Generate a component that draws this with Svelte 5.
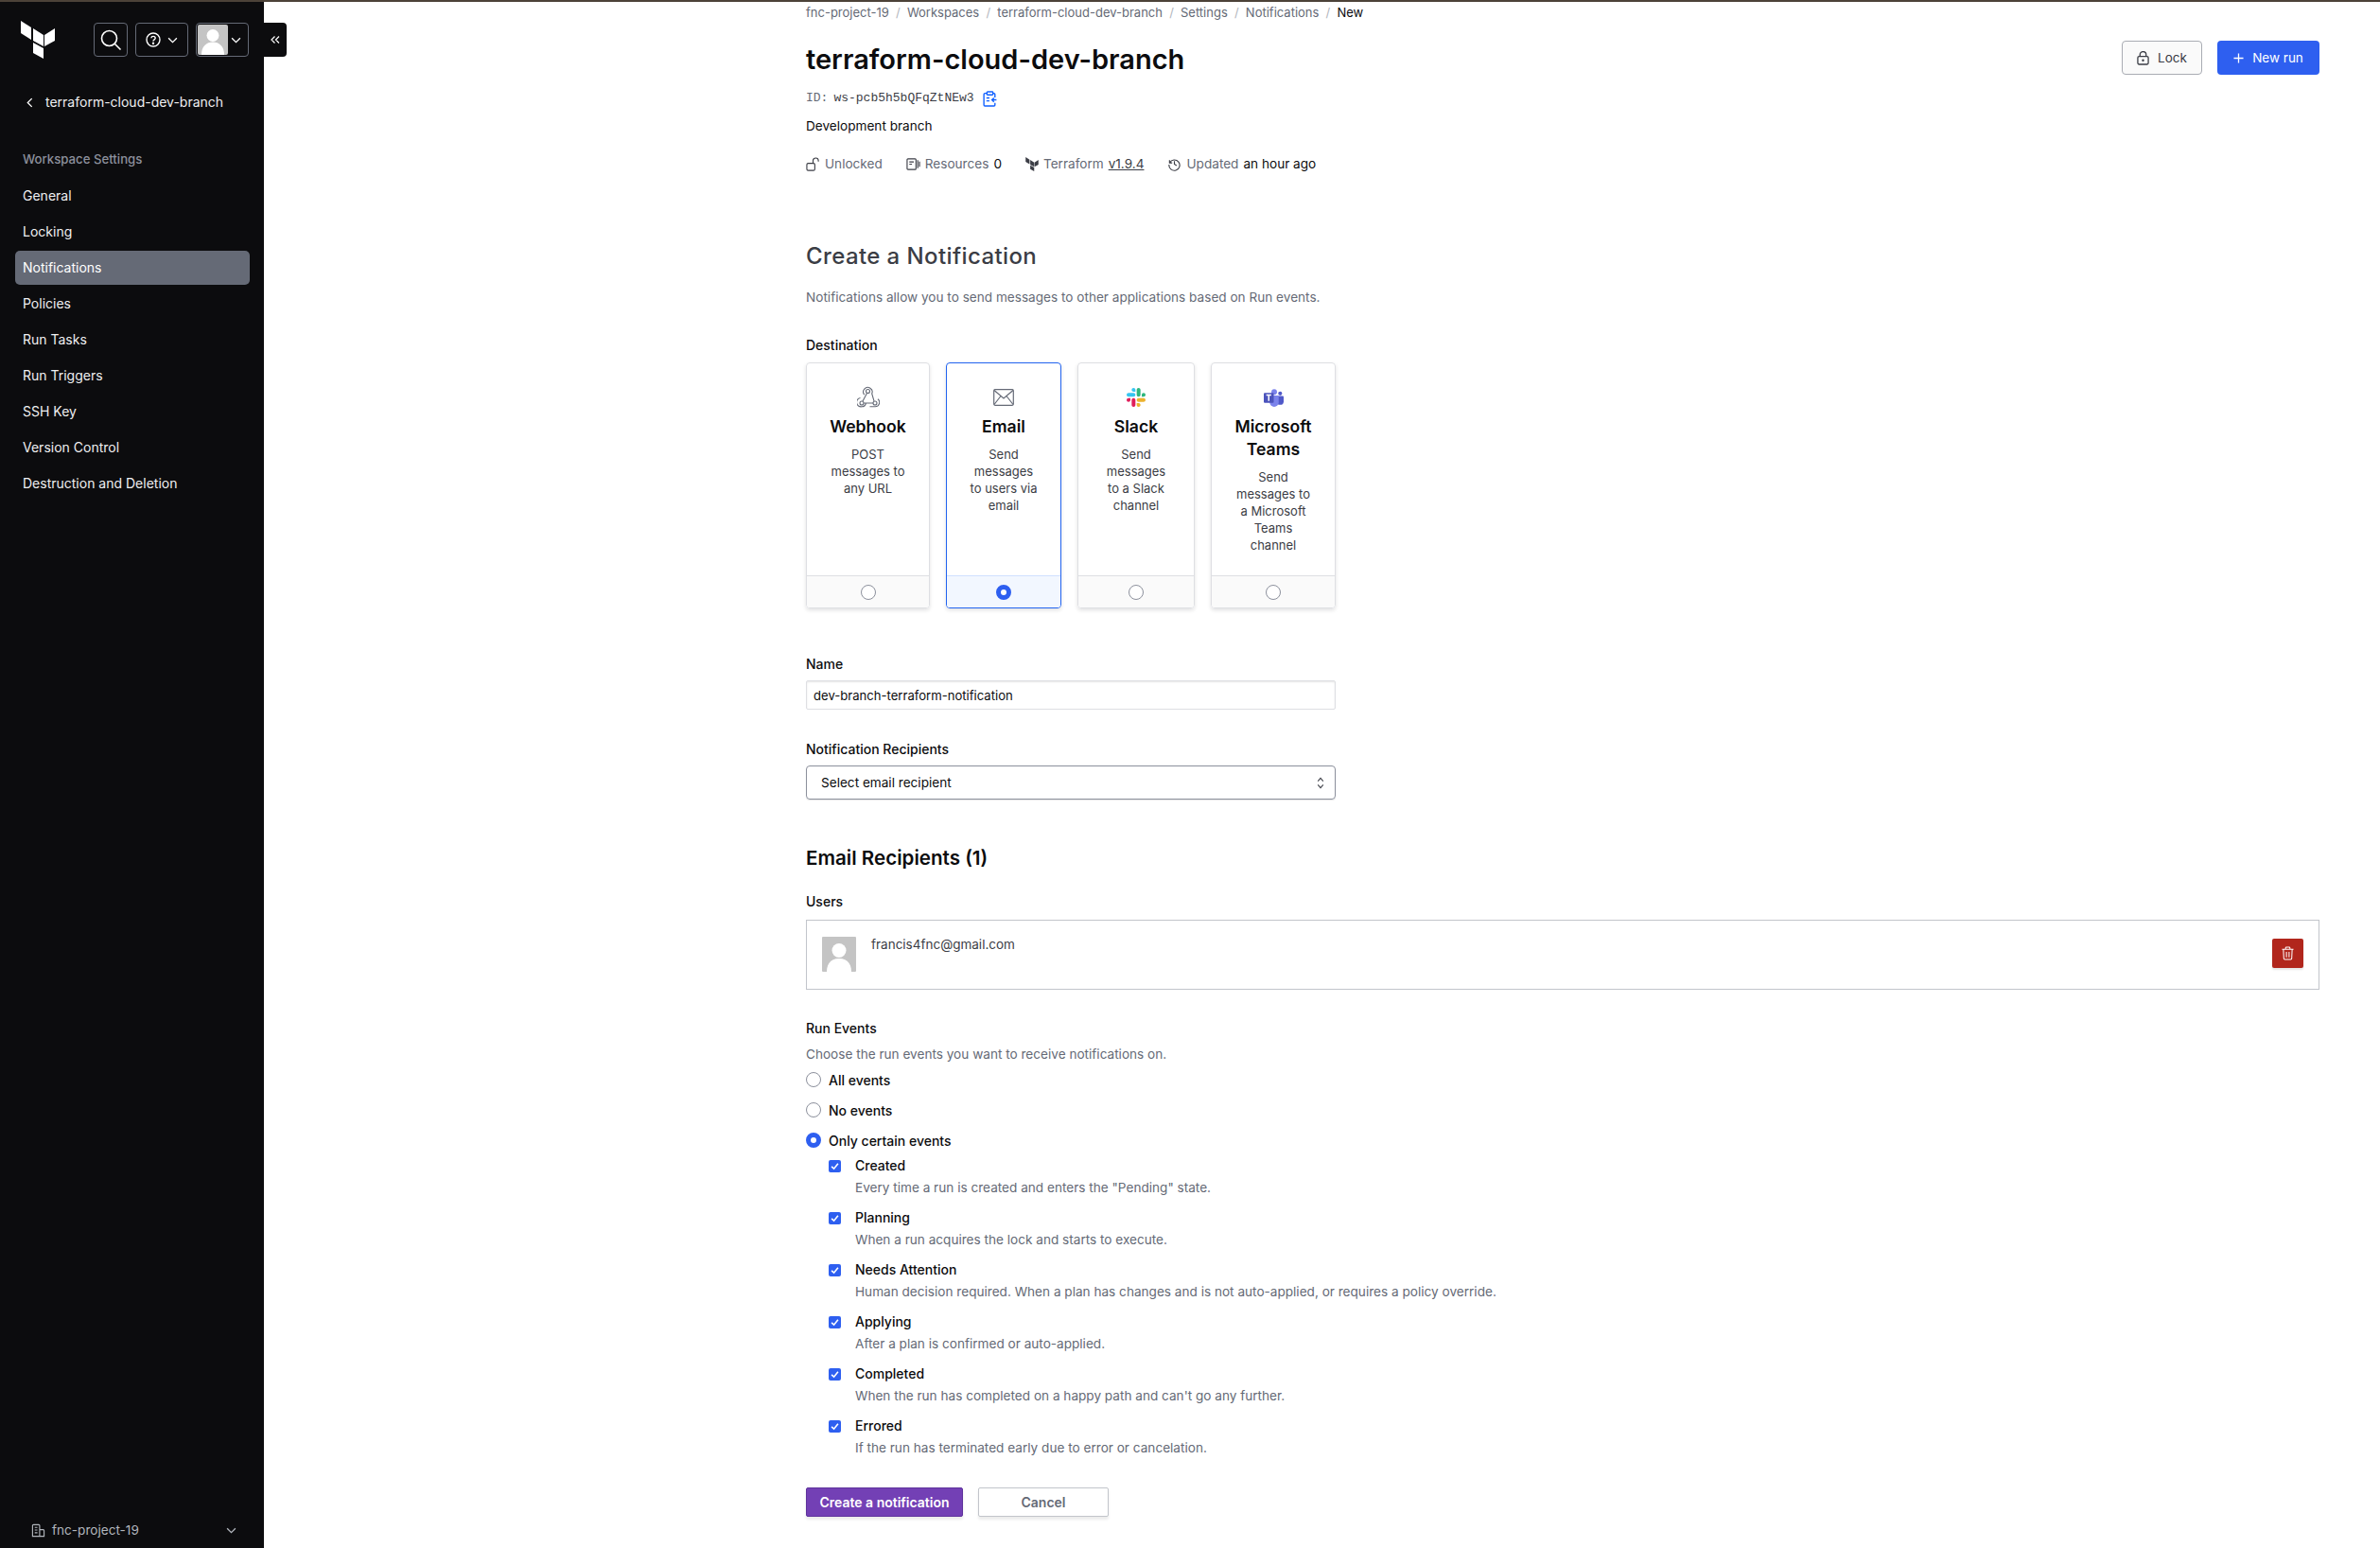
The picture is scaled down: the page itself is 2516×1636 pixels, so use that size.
<script>
	const crumbs = ["fnc-project-19", "Workspaces", "terraform-cloud-dev-branch", "Settings", "Notifications"];
	const navItems = ["General", "Locking", "Notifications", "Policies", "Run Tasks", "Run Triggers", "SSH Key", "Version Control", "Destruction and Deletion"];
	const destinations = [
		{ id: "webhook", title: "Webhook", text: "POST messages to any URL", width: 131 },
		{ id: "email", title: "Email", text: "Send messages to users via email", width: 122 },
		{ id: "slack", title: "Slack", text: "Send messages to a Slack channel", width: 124 },
		{ id: "teams", title: "Microsoft Teams", text: "Send messages to a Microsoft Teams channel", width: 132 }
	];
	const events = [
		{ name: "Created", text: 'Every time a run is created and enters the "Pending" state.' },
		{ name: "Planning", text: "When a run acquires the lock and starts to execute." },
		{ name: "Needs Attention", text: "Human decision required. When a plan has changes and is not auto-applied, or requires a policy override." },
		{ name: "Applying", text: "After a plan is confirmed or auto-applied." },
		{ name: "Completed", text: "When the run has completed on a happy path and can't go any further." },
		{ name: "Errored", text: "If the run has terminated early due to error or cancelation." }
	];
</script>

<div class="topline"></div>
<div class="page">
	<aside class="sidebar">
		<div class="side-head">
			<svg class="logo" viewBox="22 22 36 40" width="36" height="40" fill="#fff">
				<polygon points="22,22 33,29 33,42 22,35" />
				<polygon points="35,30 46,37 46,49 35,43" />
				<polygon points="47,37 58,30 58,43 47,49" />
				<polygon points="35,45 46,51 46,62 35,56" />
			</svg>
			<button class="icon-btn search" aria-label="Search">
				<svg viewBox="0 0 24 24" width="24" height="24" fill="none" stroke="#fff" stroke-width="1.6"><circle cx="10.5" cy="10.5" r="8" /><path d="M16.5 16.5l6 6" /></svg>
			</button>
			<button class="icon-btn help" aria-label="Help">
				<svg viewBox="0 0 16 16" width="16" height="16" fill="none" stroke="#fff" stroke-width="1.4"><circle cx="8" cy="8" r="7" /><path d="M5.9 6.2C6 5 7 4.4 8 4.4c1.2 0 2.2.8 2.2 1.9 0 1.500-2.200 1.600-2.200 3.200" /><circle cx="8" cy="11.700" r=".5" fill="#fff" /></svg>
				<svg viewBox="0 0 12 8" width="11" height="7" fill="none" stroke="#fff" stroke-width="1.500"><path d="M1 1.500l5 5 5-5" /></svg>
			</button>
			<button class="icon-btn user" aria-label="Account">
				<svg class="avatar-small" viewBox="0 0 32 32" width="32" height="32"><rect width="32" height="32" rx="2" fill="#c4c4c4" /><circle cx="16" cy="11.500" r="6.500" fill="#fff" /><path d="M4 32c0-9 5-13.500 12-13.500S28 23 28 32z" fill="#fff" /></svg>
				<svg viewBox="0 0 12 8" width="11" height="7" fill="none" stroke="#fff" stroke-width="1.500"><path d="M1 1.500l5 5 5-5" /></svg>
			</button>
		</div>
		<div class="back">
			<svg viewBox="0 0 8 12" width="7" height="11" fill="none" stroke="#fff" stroke-width="1.500"><path d="M6.500 1L1.500 6l5 5" /></svg>
			<span>terraform-cloud-dev-branch</span>
		</div>
		<div class="side-title">Workspace Settings</div>
		<nav class="side-nav">
			{#each navItems as item}
				<div class="nav-item" class:active={item === "Notifications"}>{item}</div>
			{/each}
		</nav>
		<div class="org">
			<svg viewBox="0 0 16 16" width="15" height="15" fill="none" stroke="#b2b6bd" stroke-width="1.200"><path d="M1.500 14.500V2.500a1 1 0 0 1 1-1h6a1 1 0 0 1 1 1v12zM9.500 7h4a1 1 0 0 1 1 1v6.500h-5M4 4.500h3M4 7.500h3M4 10.500h3" /></svg>
			<span>fnc-project-19</span>
			<svg class="org-arrow" viewBox="0 0 12 8" width="11" height="7" fill="none" stroke="#b2b6bd" stroke-width="1.500"><path d="M1 1.500l5 5 5-5" /></svg>
		</div>
		<div class="collapse">
			<svg viewBox="0 0 10 10" width="10" height="10" fill="none" stroke="#fff" stroke-width="1.200"><path d="M4.500 1.500L1 5l3.500 3.500M9 1.500L5.500 5 9 8.500" /></svg>
		</div>
	</aside>

	<main class="content">
		<div class="crumbs">
			{#each crumbs as c}
				<span>{c}</span><span class="slash">/</span>
			{/each}
			<span class="current">New</span>
		</div>

		<header class="ws-header">
			<div>
				<h1>terraform-cloud-dev-branch</h1>
				<div class="ws-id">
					<span>ID:</span> <span class="ws-id-val">ws-pcb5h5bQFqZtNEw3</span>
					<svg class="copy" viewBox="0 0 14 16" width="15" height="17" fill="none" stroke="#1060ff" stroke-width="1.300"><path d="M4 2.500H2a1 1 0 0 0-1 1v10.500a1 1 0 0 0 1 1h9a1 1 0 0 0 1-1v-2M10 2.500h1a1 1 0 0 1 1 1v3" /><rect x="4" y="1" width="6" height="3" rx=".7" /><path d="M3.500 7h3M3.500 10h3M13.500 9h-4.500M11 7L9 9l2 2" /></svg>
				</div>
				<p class="ws-desc">Development branch</p>
				<div class="ws-meta">
					<span class="meta-item">
						<svg viewBox="0 0 16 16" width="15" height="15" fill="none" stroke="#3b3d45" stroke-width="1.200"><rect x="1" y="7" width="9" height="8" rx="1.500" /><path d="M8 7V4a3 3 0 0 1 6 0v1" /></svg>
						Unlocked
					</span>
					<span class="meta-item">
						<svg viewBox="0 0 16 16" width="15" height="15" fill="none" stroke="#3b3d45" stroke-width="1.200"><rect x="1" y="2" width="10" height="12" rx="1" /><path d="M3.500 5.500h5M3.500 8h3M13 3.500v9M15 5v6" /></svg>
						Resources <b>0</b>
					</span>
					<span class="meta-item">
						<svg viewBox="22 22 36 40" width="14" height="15" fill="#3b3d45"><polygon points="22,22 33,29 33,42 22,35" /><polygon points="35,30 46,37 46,49 35,43" /><polygon points="47,37 58,30 58,43 47,49" /><polygon points="35,45 46,51 46,62 35,56" /></svg>
						Terraform <b class="ver">v1.9.4</b>
					</span>
					<span class="meta-item">
						<svg viewBox="0 0 16 16" width="15" height="15" fill="none" stroke="#3b3d45" stroke-width="1.200"><path d="M2.500 3.500v3h3M2.700 6.300A6 6 0 1 1 2 8.500M8 4.500V8l2.500 1.500" /></svg>
						Updated <b>an hour ago</b>
					</span>
				</div>
			</div>
			<div class="ws-actions">
				<button class="btn-lock">
					<svg viewBox="0 0 14 16" width="13" height="15" fill="none" stroke="#3b3d45" stroke-width="1.400"><rect x="1" y="6" width="12" height="9" rx="1.500" /><path d="M3.500 6V4a3.500 3.500 0 0 1 7 0v2" /><circle cx="7" cy="10.500" r=".6" /></svg>
					Lock
				</button>
				<button class="btn-run">
					<svg viewBox="0 0 12 12" width="11" height="11" fill="none" stroke="#fff" stroke-width="1.400"><path d="M6 .5v11M.5 6h11" /></svg>
					New run
				</button>
			</div>
		</header>

		<h2 class="create-title">Create a Notification</h2>
		<p class="create-desc">Notifications allow you to send messages to other applications based on Run events.</p>

		<div class="label dest-label">Destination</div>
		<div class="cards">
			{#each destinations as d}
				<div class="card" class:selected={d.id === "email"} style="width: {d.width}px">
					<div class="card-body">
						<div class="card-icon">
							{#if d.id === "webhook"}
								<svg viewBox="0 0 24 24" width="24" height="24" fill="none" stroke="#656a76" stroke-width="1.100"><circle cx="11.500" cy="5.500" r="2" /><circle cx="5" cy="18" r="2" /><circle cx="19" cy="18" r="2" /><path d="M7.800 9.200a4.700 4.700 0 1 1 7.900-1.200L18 15.800M10.500 7.500L6 16M7.200 18h9.800M3.500 12.500a4.600 4.600 0 0 0 1.500 9.300c2.500 0 4-1.800 4.500-3.800M13.500 21.800H19a4.500 4.500 0 0 0 3-8" /></svg>
							{:else if d.id === "email"}
								<svg viewBox="0 0 22 18" width="22" height="18" fill="none" stroke="#656a76" stroke-width="1.200"><rect x=".7" y=".7" width="20.600" height="16.600" rx="1.200" /><path d="M1 1.500l10 8.500 10-8.500M1 16.500l7-9M21 16.500l-7-9" /></svg>
							{:else if d.id === "slack"}
								<svg viewBox="0 0 2447.6 2452.5" width="20" height="20" fill-rule="evenodd">
									<path d="m897.4 0c-135.3.1-244.8 109.9-244.7 245.2-.1 135.3 109.5 245.1 244.8 245.2h244.8v-245.1c.1-135.3-109.5-245.1-244.900-245.300zm0 654h-652.6c-135.3.1-244.900 109.900-244.800 245.200-.2 135.300 109.400 245.100 244.700 245.300h652.700c135.300-.1 244.900-109.900 244.800-245.200.1-135.400-109.500-245.200-244.800-245.300z" fill="#36c5f0" />
									<path d="m2447.600 899.200c.1-135.300-109.500-245.100-244.800-245.200-135.300.1-244.900 109.900-244.800 245.200v245.300h244.800c135.300-.1 244.900-109.900 244.800-245.300zm-652.700 0v-654c.1-135.200-109.400-245-244.700-245.200-135.300.1-244.900 109.900-244.800 245.200v654c-.2 135.300 109.400 245.100 244.700 245.300 135.300-.1 244.900-109.900 244.800-245.300z" fill="#2eb67d" />
									<path d="m1550.100 2452.500c135.300-.1 244.900-109.900 244.800-245.200.1-135.300-109.500-245.100-244.800-245.200h-244.800v245.200c-.1 135.200 109.500 245 244.800 245.200zm0-654.100h652.700c135.300-.1 244.900-109.900 244.800-245.200.2-135.300-109.400-245.100-244.700-245.300h-652.700c-135.300.1-244.900 109.900-244.800 245.200-.1 135.400 109.400 245.200 244.700 245.300z" fill="#ecb22e" />
									<path d="m0 1553.200c-.1 135.300 109.500 245.100 244.800 245.200 135.300-.1 244.900-109.900 244.800-245.200v-245.200h-244.800c-135.300.1-244.900 109.900-244.800 245.200zm652.700 0v654c-.2 135.300 109.400 245.100 244.700 245.300 135.300-.1 244.900-109.900 244.800-245.200v-653.900c.2-135.300-109.400-245.100-244.700-245.300-135.400 0-244.900 109.800-244.800 245.100z" fill="#e01e5a" />
								</svg>
							{:else}
								<svg viewBox="0 0 20 18" width="21" height="19">
									<circle cx="16.500" cy="4.500" r="2" fill="#5059c9" />
									<path d="M13 7h6a1 1 0 0 1 1 1v4.500a3.500 3.500 0 0 1-7 0z" fill="#5059c9" />
									<circle cx="10.500" cy="3" r="2.800" fill="#7b83eb" />
									<path d="M6 6.500h9v7a4.500 4.500 0 0 1-9 0z" fill="#7b83eb" />
									<rect y="4" width="10" height="10" rx="1" fill="#4b53bc" />
									<path d="M2.500 6.200h5M5 6.200v5.800" stroke="#fff" stroke-width="1.400" fill="none" />
								</svg>
							{/if}
						</div>
						<div class="card-title">{d.title}</div>
						<div class="card-text">{d.text}</div>
					</div>
					<div class="card-foot"><span class="radio" class:on={d.id === "email"}></span></div>
				</div>
			{/each}
		</div>

		<label class="label name-label" for="notif-name">Name</label>
		<input id="notif-name" class="name-input" value="dev-branch-terraform-notification" />

		<div class="label recip-label">Notification Recipients</div>
		<div class="select">
			<span>Select email recipient</span>
			<svg viewBox="0 0 8 14" width="8" height="13" fill="none" stroke="#3b3d45" stroke-width="1.100"><path d="M1 5l3-3.500L7 5M1 9l3 3.500L7 9" /></svg>
		</div>

		<h3 class="recip-title">Email Recipients (1)</h3>
		<div class="label users-label">Users</div>
		<div class="user-box">
			<svg class="user-avatar" viewBox="0 0 36 37" width="36" height="37"><rect width="36" height="37" rx="1" fill="#c4c4c4" /><circle cx="18" cy="14.500" r="7.500" fill="#fff" /><path d="M5 37c0-9 5-14 13-14s13 5 13 14z" fill="#fff" /></svg>
			<span class="user-mail">francis4fnc@gmail.com</span>
			<button class="btn-del" aria-label="Remove">
				<svg viewBox="0 0 14 16" width="13" height="15" fill="none" stroke="#fff" stroke-width="1.100"><path d="M.5 3.500h13M4.500 3.500V2a1 1 0 0 1 1-1h3a1 1 0 0 1 1 1v1.500M2 3.500l.5 10.500a1 1 0 0 0 1 1h7a1 1 0 0 0 1-1L12 3.500M5.500 6.500v6M8.500 6.500v6" /></svg>
			</button>
		</div>

		<div class="label run-label">Run Events</div>
		<p class="run-desc">Choose the run events you want to receive notifications on.</p>
		<div class="run-opts">
			<div class="run-opt"><span class="radio"></span>All events</div>
			<div class="run-opt"><span class="radio"></span>No events</div>
			<div class="run-opt"><span class="radio on"></span>Only certain events</div>
		</div>

		<div class="events">
			{#each events as e}
				<div class="event">
					<span class="check">
						<svg viewBox="0 0 10 10" width="9" height="9" fill="none" stroke="#fff" stroke-width="1.800"><path d="M1.200 5.500L4 8l4.800-6" /></svg>
					</span>
					<div>
						<div class="event-name">{e.name}</div>
						<div class="event-text">{e.text}</div>
					</div>
				</div>
			{/each}
		</div>

		<div class="form-actions">
			<button class="btn-create">Create a notification</button>
			<button class="btn-cancel">Cancel</button>
		</div>
	</main>
</div>

<style>
	:global(body) {
		margin: 0;
		background: #fff;
		font-family: Inter, "Liberation Sans", sans-serif;
		color: #0c0c0e;
	}

	button {
		font-family: inherit;
		cursor: pointer;
	}

	.topline {
		height: 2px;
		background: #4c4238;
	}

	.page {
		display: flex;
		height: 1634px;
		overflow: hidden;
	}

	.sidebar {
		position: relative;
		flex: 0 0 279px;
		display: flex;
		flex-direction: column;
		background: #0c0c0e;
		color: #efeff1;
		font-size: 13px;
	}

	.side-head {
		display: flex;
		align-items: flex-start;
		padding: 20px 0 0 22px;
	}

	.logo {
		margin-right: 41px;
	}

	.icon-btn {
		display: flex;
		align-items: center;
		height: 36px;
		padding: 0;
		background: none;
		border: 1px solid #656a76;
		border-radius: 4px;
		margin-top: 2px;
	}

	.search {
		width: 36px;
		justify-content: center;
	}

	.help {
		width: 56px;
		margin-left: 8px;
		padding: 0 10px;
		justify-content: space-between;
	}

	.user {
		width: 56px;
		margin-left: 8px;
		padding: 0 7px 0 1px;
		justify-content: space-between;
	}

	.back {
		display: flex;
		align-items: center;
		gap: 13px;
		margin: 36px 0 0 28px;
		line-height: 20px;
		font-size: 14px;
	}

	.side-title {
		margin: 40px 0 0 24px;
		font-size: 13.200px;
		font-weight: 500;
		line-height: 20px;
		color: #8c909c;
	}

	.side-nav {
		display: flex;
		flex-direction: column;
		margin: 11px 15px 0 16px;
	}

	.nav-item {
		height: 36px;
		line-height: 36px;
		margin-bottom: 2px;
		padding-left: 8px;
		border-radius: 5px;
		font-size: 14px;
	}

	.nav-item.active {
		background: #656a76;
		color: #fff;
	}

	.org {
		display: flex;
		align-items: center;
		gap: 7px;
		margin: auto 0 0;
		padding: 0 29px 9px 33px;
		line-height: 20px;
		font-size: 13.600px;
		color: #b2b6bd;
	}

	.org-arrow {
		margin-left: auto;
	}

	.collapse {
		position: absolute;
		top: 22px;
		left: 279px;
		width: 24px;
		height: 36px;
		display: flex;
		align-items: center;
		justify-content: center;
		background: #0c0c0e;
		border-radius: 0 4px 4px 0;
	}

	.content {
		flex: 1;
		min-width: 0;
		padding: 0 64px 0 573px;
		font-size: 13.600px;
	}

	.crumbs {
		display: flex;
		gap: 7.200px;
		height: 22px;
		line-height: 22px;
		font-size: 13px;
		color: #656a76;
	}

	.slash {
		color: #b2b6bd;
	}

	.current {
		color: #0c0c0e;
	}

	.ws-header {
		display: flex;
		justify-content: space-between;
		align-items: flex-start;
	}

	h1 {
		margin: 19px 0 0;
		font-size: 29px;
		line-height: 40px;
		font-weight: 600;
	}

	.ws-id {
		display: flex;
		align-items: center;
		gap: 6px;
		margin-top: 11px;
		font-family: "Liberation Mono", monospace;
		font-size: 13px;
		line-height: 20px;
		color: #656a76;
	}

	.ws-id-val {
		color: #3b3d45;
	}

	.copy {
		margin-left: 3px;
	}

	.ws-desc {
		margin: 9px 0 0;
		font-size: 13.600px;
		line-height: 20px;
	}

	.ws-meta {
		display: flex;
		gap: 25px;
		margin-top: 20px;
		font-size: 13.600px;
		line-height: 20px;
		color: #656a76;
	}

	.meta-item {
		display: flex;
		align-items: center;
		gap: 5px;
	}

	.meta-item b {
		font-weight: 400;
		color: #0c0c0e;
	}

	.meta-item .ver {
		text-decoration: underline;
		color: #3b3d45;
	}

	.ws-actions {
		display: flex;
		gap: 16px;
		margin-top: 19px;
	}

	.btn-lock,
	.btn-run {
		display: flex;
		align-items: center;
		justify-content: center;
		gap: 9px;
		height: 36px;
		font-size: 13.500px;
		border-radius: 4px;
	}

	.btn-lock {
		width: 85px;
		background: #fafafa;
		border: 1px solid #a9acb3;
		color: #3b3d45;
	}

	.btn-run {
		width: 108px;
		background: #2e5ff0;
		border: none;
		color: #fff;
	}

	.create-title {
		margin: 72px 0 0;
		font-size: 24px;
		font-weight: 500;
		line-height: 32px;
		letter-spacing: .4px;
		color: #3b3d45;
	}

	.create-desc {
		margin: 17px 0 0;
		line-height: 20px;
		color: #656a76;
	}

	.label {
		display: block;
		font-size: 14px;
		font-weight: 500;
		line-height: 20px;
		color: #0c0c0e;
	}

	.dest-label {
		margin-top: 31px;
	}

	.cards {
		display: flex;
		gap: 17px;
		margin-top: 8px;
	}

	.card {
		display: flex;
		flex-direction: column;
		height: 260px;
		box-sizing: border-box;
		border: 1px solid #dedfe3;
		border-radius: 4px;
		overflow: hidden;
		box-shadow: 0 2px 4px rgba(12, 12, 14, .12);
		text-align: center;
	}

	.card.selected {
		border-color: #2264f0;
	}

	.card-body {
		flex: 1;
	}

	.card-icon {
		display: flex;
		align-items: center;
		justify-content: center;
		height: 22px;
		margin-top: 25px;
	}

	.card-title {
		margin-top: 8px;
		padding: 0 8px;
		font-size: 17.600px;
		font-weight: 600;
		line-height: 24px;
	}

	.card-text {
		margin-top: 8px;
		padding: 0 24px;
		font-size: 13px;
		line-height: 18px;
		color: #3b3d45;
	}

	.card-foot {
		display: flex;
		align-items: center;
		justify-content: center;
		height: 33px;
		border-top: 1px solid #dedfe3;
		background: #fafafa;
	}

	.selected .card-foot {
		background: #f2f7ff;
		border-top-color: #d0e0ff;
	}

	.radio {
		box-sizing: border-box;
		flex: none;
		width: 16px;
		height: 16px;
		border-radius: 50%;
		border: 1px solid #8c909c;
		background: #fff;
	}

	.radio.on {
		border: 5px solid #2e5ff0;
	}

	.name-label {
		margin-top: 49px;
	}

	.name-input {
		display: block;
		box-sizing: border-box;
		width: 560px;
		height: 31px;
		margin-top: 7px;
		padding: 0 7px;
		border: 1px solid #dedfe3;
		border-radius: 2px;
		box-shadow: inset 0 1px 2px rgba(12, 12, 14, .1);
		font: 13.100px Inter, sans-serif;
		color: #0c0c0e;
	}

	.recip-label {
		margin-top: 32px;
	}

	.select {
		display: flex;
		align-items: center;
		justify-content: space-between;
		box-sizing: border-box;
		width: 560px;
		height: 36px;
		margin-top: 7px;
		padding: 0 11px 0 15px;
		border: 1px solid #8c909c;
		border-radius: 4px;
		box-shadow: 0 1px 1px rgba(12, 12, 14, .1);
		font-size: 13.600px;
	}

	.recip-title {
		margin: 48px 0 0;
		font-size: 20.600px;
		font-weight: 600;
		line-height: 28px;
	}

	.users-label {
		margin-top: 22px;
	}

	.user-box {
		display: flex;
		align-items: flex-start;
		box-sizing: border-box;
		height: 74px;
		margin-top: 9px;
		padding: 17px 16px 0 16px;
		border: 1px solid #c2c5cb;
	}

	.user-mail {
		margin: -2px 0 0 16px;
		line-height: 20px;
		font-size: 13.500px;
		color: #3b3d45;
	}

	.btn-del {
		display: flex;
		align-items: center;
		justify-content: center;
		width: 33px;
		height: 31px;
		margin: 2px 0 0 auto;
		padding: 0;
		background: #b1261c;
		border: none;
		border-radius: 2px;
		box-shadow: 0 2px 2px rgba(12, 12, 14, .1);
	}

	.run-label {
		margin-top: 31px;
	}

	.run-desc {
		margin: 7px 0 0;
		line-height: 20px;
		color: #656a76;
	}

	.run-opts {
		display: flex;
		flex-direction: column;
		gap: 12px;
		margin-top: 7px;
	}

	.run-opt {
		display: flex;
		align-items: center;
		gap: 8px;
		height: 20px;
		font-size: 14px;
		font-weight: 500;
	}

	.events {
		display: flex;
		flex-direction: column;
		gap: 11px;
		margin: 7px 0 0 24px;
	}

	.event {
		display: flex;
		gap: 15px;
	}

	.check {
		flex: none;
		display: flex;
		align-items: center;
		justify-content: center;
		width: 13px;
		height: 13px;
		margin-top: 4px;
		background: #2e5ff0;
		border-radius: 2px;
	}

	.event-name {
		font-size: 14px;
		font-weight: 500;
		line-height: 20px;
	}

	.event-text {
		margin-top: 2px;
		font-size: 13.600px;
		line-height: 22px;
		color: #656a76;
	}

	.form-actions {
		display: flex;
		gap: 16px;
		margin-top: 31px;
	}

	.btn-create,
	.btn-cancel {
		height: 31px;
		font-size: 14px;
		font-weight: 600;
		border-radius: 2px;
		box-shadow: 0 3px 3px rgba(12, 12, 14, .08);
	}

	.btn-create {
		width: 166px;
		background: #7340b5;
		border: 1px solid #5f339c;
		color: #fff;
	}

	.btn-cancel {
		width: 138px;
		background: #fff;
		border: 1px solid #c2c5cb;
		color: #656a76;
	}
</style>
